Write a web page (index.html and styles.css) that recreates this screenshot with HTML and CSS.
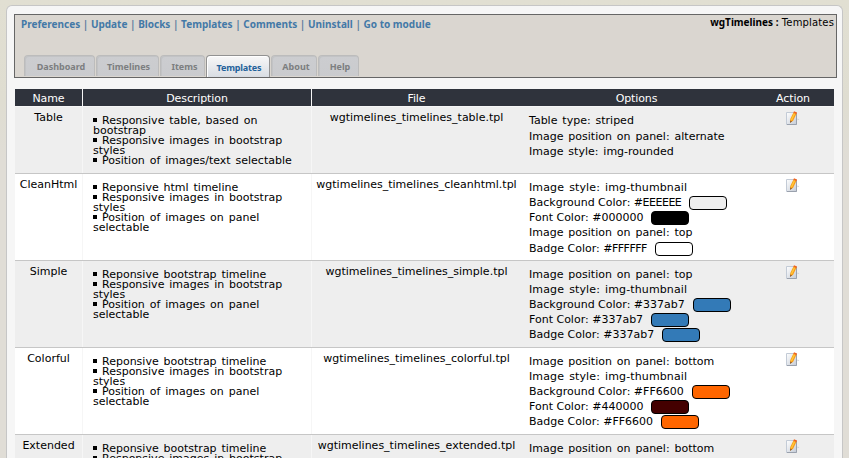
FILE: index.html
```html
<!DOCTYPE html>
<html lang="en">
<head>
<meta charset="utf-8">
<title>wgTimelines : Templates</title>
<link rel="stylesheet" href="styles.css">
</head>
<body>
<svg class="defs" width="0" height="0">
  <linearGradient id="paper" x1="0" y1="0" x2="1" y2="1"><stop offset="0" stop-color="#fff"/><stop offset="1" stop-color="#c4cbd6"/></linearGradient>
  <symbol id="edit" viewBox="0 0 16 16">
    <path d="M1.500 1.500h10v12h-10z" fill="url(#paper)" stroke="#c3cbd6"/>
    <path d="M11.500 2v11.500H2" fill="none" stroke="#9aa1ad"/>
    <path d="M12.500 7.500l1.800.8-1.800 1z" fill="#c9cdd3"/>
    <path d="M5 11.500l.3-3.500L8.500 1.500l3 1.200L8 10z" fill="#f99b16"/>
    <path d="M5.700 9L9 2l1.300.500L7 9.500z" fill="#ffc83c"/>
    <path d="M8.400 1.700L9 .300l3 1.200-.6 1.700z" fill="#f0641e"/>
    <path d="M5 12l.3-2.500 1.800.9z" fill="#8a5a2c"/>
  </symbol>
</svg>
<main class="panel">
  <header class="bar">
    <div class="top">
      <nav class="links"><a>Preferences</a> | <a>Update</a> | <a>Blocks</a> | <a>Templates</a> | <a>Comments</a> | <a>Uninstall</a> | <a>Go to module</a></nav>
      <div class="crumb"><b>wgTimelines :</b> Templates</div>
    </div>
    <nav class="tabs">
      <a class="tab t1">Dashboard</a><a class="tab t2">Timelines</a><a class="tab t3">Items</a><a class="tab t4 on">Templates</a><a class="tab t5">About</a><a class="tab t6">Help</a>
    </nav>
  </header>
  <section class="table">
    <div class="row head"><div>Name</div><div>Description</div><div>File</div><div>Options</div><div>Action</div></div>
    <div class="row first">
      <div class="name">Table</div>
      <ul class="desc"><li>Responsive table, based on<br>bootstrap</li><li>Responsive images in bootstrap<br>styles</li><li>Position of images/text selectable</li></ul>
      <div class="file">wgtimelines_timelines_table.tpl</div>
      <div class="opts"><p class="lead">Table type: striped</p><p>Image position on panel: alternate</p><p>Image style: img-rounded</p></div>
      <div class="act"><svg><use href="#edit"/></svg></div>
    </div>
    <div class="row alt">
      <div class="name">CleanHtml</div>
      <ul class="desc"><li>Reponsive html timeline</li><li>Responsive images in bootstrap<br>styles</li><li>Position of images on panel<br>selectable</li></ul>
      <div class="file">wgtimelines_timelines_cleanhtml.tpl</div>
      <div class="opts"><p class="wide">Image style: img-thumbnail</p><p class="color">Background Color: <span class="caps">#EEEEEE</span><i class="sw light"></i></p><p class="color">Font Color: #000000<i class="sw black"></i></p><p class="lead">Image position on panel: top</p><p class="color">Badge Color: <span class="caps">#FFFFFF</span><i class="sw white"></i></p></div>
      <div class="act"><svg><use href="#edit"/></svg></div>
    </div>
    <div class="row">
      <div class="name">Simple</div>
      <ul class="desc"><li>Reponsive bootstrap timeline</li><li>Responsive images in bootstrap<br>styles</li><li>Position of images on panel<br>selectable</li></ul>
      <div class="file">wgtimelines_timelines_simple.tpl</div>
      <div class="opts"><p>Image position on panel: top</p><p class="wide">Image style: img-thumbnail</p><p class="color">Background Color: #337ab7<i class="sw blue"></i></p><p class="color">Font Color: #337ab7<i class="sw blue"></i></p><p class="color">Badge Color: #337ab7<i class="sw blue"></i></p></div>
      <div class="act"><svg><use href="#edit"/></svg></div>
    </div>
    <div class="row alt">
      <div class="name">Colorful</div>
      <ul class="desc"><li>Reponsive bootstrap timeline</li><li>Responsive images in bootstrap<br>styles</li><li>Position of images on panel<br>selectable</li></ul>
      <div class="file">wgtimelines_timelines_colorful.tpl</div>
      <div class="opts"><p>Image position on panel: bottom</p><p class="wide">Image style: img-thumbnail</p><p class="color">Background Color: #FF6600<i class="sw orange"></i></p><p class="color">Font Color: #440000<i class="sw maroon"></i></p><p class="color">Badge Color: #FF6600<i class="sw orange"></i></p></div>
      <div class="act"><svg><use href="#edit"/></svg></div>
    </div>
    <div class="row">
      <div class="name">Extended</div>
      <ul class="desc"><li>Reponsive bootstrap timeline</li><li>Responsive images in bootstrap<br>styles</li></ul>
      <div class="file">wgtimelines_timelines_extended.tpl</div>
      <div class="opts"><p>Image position on panel: bottom</p></div>
      <div class="act"><svg><use href="#edit"/></svg></div>
    </div>
  </section>
</main>
</body>
</html>
```
FILE: styles.css
```css
* { box-sizing: border-box; }
html, body { height: 100%; }
body { margin: 0; padding: 5px 6px 0; overflow: hidden; background: linear-gradient(#e1dfd2 0, #dfddd1 100px, #e0ddd6 160px, #e0ddd6); font: 10px/15px "DejaVu Sans", sans-serif; color: #000; white-space: nowrap; }
.defs { position: absolute; }
.panel { height: 453px; overflow: hidden; border: 1px solid #c6c6c6; border-bottom: 0; border-radius: 6px 6px 0 0; background: #f6f6f6; padding: 8px 5px 0 7px; }
.bar { height: 64px; border: 1px solid #666; background: #dad6d0; display: flex; flex-direction: column; justify-content: space-between; }
.top { display: flex; justify-content: space-between; padding: 0 2px 0 6px; }
.links { font: bold 10px/18px "Noto Sans", sans-serif; color: #5d7fa0; }
.links a { color: #4379a7; }
.crumb { letter-spacing: .15px; }
.crumb b { font-family: "Noto Sans", sans-serif; letter-spacing: 0; }
.tabs { display: flex; align-items: flex-end; padding-left: 9px; font: bold 9px/22px "Noto Sans", sans-serif; }
.tab { height: 21px; margin: 0 1px 1px 0; border: 1px solid #bcbcbc; border-width: 1px 1px 0; border-radius: 4px 4px 0 0; background: linear-gradient(#cccdd0, #cacbce); color: #7c7e80; text-align: center; box-shadow: inset 1px 1px #c2c3c5; }
.t1 { width: 71px; padding-left: 3px; }
.t2 { width: 63px; padding-left: 2px; }
.t3 { width: 45px; padding-left: 4px; }
.t4 { width: 64px; padding-left: 2px; letter-spacing: -.15px; }
.t5 { width: 46px; padding-left: 4px; }
.t6 { width: 41px; padding-left: 3px; }
.on { height: 22px; margin-bottom: 0; border-color: #929292; background: linear-gradient(#f8f8f8, #d9dde3); color: #24629b; box-shadow: inset 1px 1px #fff; line-height: 24px; }
.table { margin: 11px 0 0 1px; width: 819px; font-size: 11px; word-spacing: 1.4px; }
.row { display: grid; grid-template-columns: 68px 229px 209px 231px 82px; height: 87px; border-bottom: 1px solid #c6c6c6; background: #eee; }
.row > :nth-child(-n+2) { border-right: 1px solid #f6f6f6; }
.first { height: 67px; }
.alt { background: #fff; }
.head { height: 18px; border-bottom: 1px solid #f6f6f6; background: #2f333c; color: #fff; text-align: center; line-height: 19px; letter-spacing: -.1px; }
.name, .file { text-align: center; padding-top: 3px; }
.desc { margin: 0; padding: 9px 0 0 10px; list-style: none; line-height: 10px; }
.desc li::before { content: ""; display: inline-block; width: 4px; height: 4px; margin-right: 5px; background: #000; vertical-align: 2px; }
.opts { padding: 6px 0 0 8px; }
.opts p { margin: 0; height: 15px; display: flex; align-items: center; white-space: pre; }
.opts .lead { margin-bottom: 1px; }
.opts .wide { letter-spacing: .13px; }
.opts .color { word-spacing: 0; }
.caps { letter-spacing: -.5px; }
.sw { width: 38px; height: 14px; border: 1px solid #000; border-radius: 4px; margin-left: 8px; }
.light { background: #eee; }
.black { background: #000; }
.white { background: #fff; }
.blue { background: #337ab7; }
.orange { background: #f60; }
.maroon { background: #400; }
.act { padding: 4px 0 0 33px; }
.act svg { display: block; width: 16px; height: 16px; }
```
